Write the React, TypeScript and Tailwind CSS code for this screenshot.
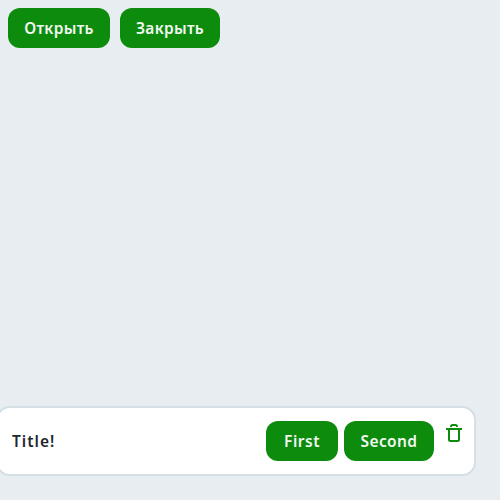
import type { ReactNode } from 'react';

function Button({ children, width, spacing = 'tracking-[0.5px]' }: { children: ReactNode; width: string; spacing?: string }) {
  return (
    <button
      type="button"
      className={`flex h-10 shrink-0 items-center justify-center whitespace-nowrap rounded-xl bg-[#0d8b0d] text-[15.5px] font-semibold leading-6 text-[#f2f8f2] ${width} ${spacing}`}
    >
      {children}
    </button>
  );
}

function TrashIcon() {
  return (
    <svg width="24" height="24" viewBox="0 0 24 24" fill="none" stroke="#0d8b0d" strokeWidth="2">
      <path d="M4 8h16" />
      <path d="M7 8v10.5c0 .9.6 1.5 1.5 1.5h7c.9 0 1.5-.6 1.5-1.5V8" />
      <path d="M9 6C9 4.6 9.5 4 10.5 4h3c1 0 1.5.6 1.5 2" />
    </svg>
  );
}

export default function App() {
  return (
    <div className="flex h-screen flex-col justify-between overflow-hidden bg-[#e8edf1] font-['Noto_Sans','Open_Sans',sans-serif]">
      <div className="flex gap-2.5 p-2">
        <Button width="w-[102px]" spacing="tracking-[0.3px]">Открыть</Button>
        <Button width="w-[100px]" spacing="tracking-[0.3px]">Закрыть</Button>
      </div>
      <div className="mb-6 -ml-1 flex h-[70px] w-[480px] items-center rounded-[14px] border-2 border-[#d4dfe6] bg-white pl-3.5 pr-2">
        <span className="grow text-[15.5px] font-semibold leading-6 tracking-[1px] text-[#1f272e]">Title!</span>
        <div className="flex gap-1.5">
          <Button width="w-[72px]">First</Button>
          <Button width="w-[90px]" spacing="tracking-[0.4px]">Second</Button>
        </div>
        <button type="button" aria-label="Delete" className="ml-2 flex h-10 items-start">
          <TrashIcon />
        </button>
      </div>
    </div>
  );
}
